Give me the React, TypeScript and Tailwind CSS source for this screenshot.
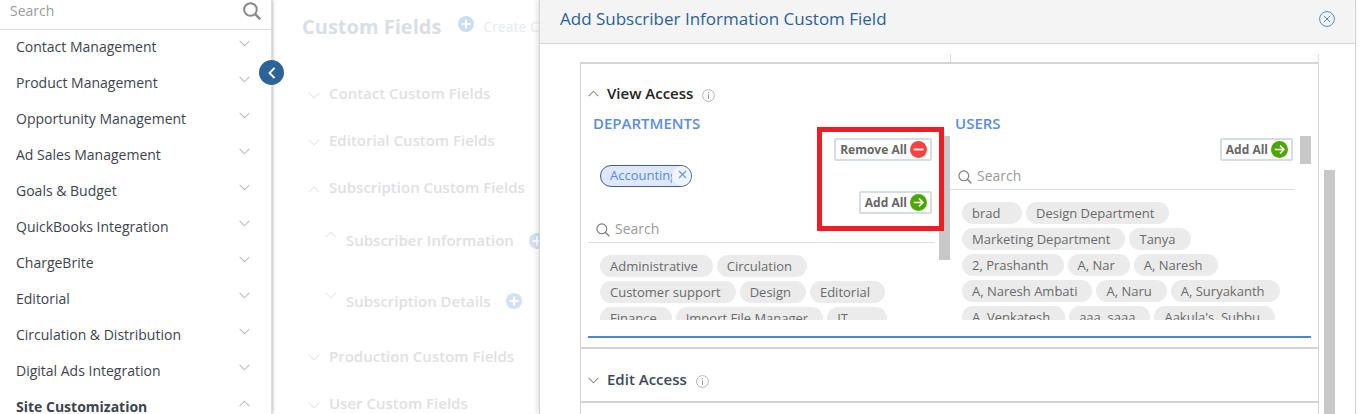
import React from "react";

const font = { fontFamily: '"Open Sans", sans-serif' };

const menu = [
    "Contact Management",
    "Product Management",
    "Opportunity Management",
    "Ad Sales Management",
    "Goals & Budget",
    "QuickBooks Integration",
    "ChargeBrite",
    "Editorial",
    "Circulation & Distribution",
    "Digital Ads Integration",
];

const departments = [
    "Administrative",
    "Circulation",
    "Customer support",
    "Design",
    "Editorial",
    "Finance",
    "Import File Manager",
    "IT",
];

const users = [
    "brad",
    "Design Department",
    "Marketing Department",
    "Tanya",
    "2, Prashanth",
    "A, Nar",
    "A, Naresh",
    "A, Naresh Ambati",
    "A, Naru",
    "A, Suryakanth",
    "A, Venkatesh",
    "aaa, saaa",
    "Aakula's, Subbu",
];

function Chevron({ up, size = 12, color = "#bbbbbb" }: { up?: boolean; size?: number; color?: string }) {
    return (
        <svg width={size} height={7} viewBox="0 0 12 7" fill="none" className="shrink-0">
            <polyline
                points={up ? "0.7,6.3 6,1 11.3,6.3" : "0.7,0.7 6,6 11.3,0.7"}
                stroke={color}
                strokeWidth="1.2"
            />
        </svg>
    );
}

function SearchIcon({ size = 14, color = "#777777", width = 1.1 }: { size?: number; color?: string; width?: number }) {
    return (
        <svg width={size} height={size} viewBox="0 0 14 14" fill="none" className="shrink-0">
            <circle cx="5.8" cy="5.8" r="4.9" stroke={color} strokeWidth={width} />
            <line x1="9.3" y1="9.3" x2="13.4" y2="13.4" stroke={color} strokeWidth={width * 1.2} />
        </svg>
    );
}

function InfoIcon() {
    return (
        <svg width="13" height="13" viewBox="0 0 13 13" fill="none" className="shrink-0">
            <circle cx="6.5" cy="6.5" r="5.9" stroke="#aaaaaa" strokeWidth="0.9" />
            <line x1="6.5" y1="5.4" x2="6.5" y2="10" stroke="#999999" strokeWidth="1" />
            <line x1="6.5" y1="3" x2="6.5" y2="4.2" stroke="#999999" strokeWidth="1" />
        </svg>
    );
}

function PlusCircle({ color, size = 16 }: { color: string; size?: number }) {
    return (
        <svg width={size} height={size} viewBox="0 0 16 16" className="shrink-0">
            <circle cx="8" cy="8" r="8" fill={color} />
            <path d="M8 3.5v9M3.5 8h9" stroke="#ffffff" strokeWidth="2" />
        </svg>
    );
}

function ActionButton({ label, remove }: { label: string; remove?: boolean }) {
    return (
        <button className="flex h-[23px] items-center gap-[3px] rounded-[2px] border-2 border-[#d3dde2] bg-white pl-[4px] pr-[3px] text-[12px] leading-none font-bold text-[#666666]">
            {label}
            <svg width="17" height="17" viewBox="0 0 17 17">
                <circle cx="8.5" cy="8.5" r="8.5" fill={remove ? "#f44242" : "#4ea600"} />
                {remove ? (
                    <path d="M3.5 8.5h10" stroke="#ffffff" strokeWidth="1.8" />
                ) : (
                    <path d="M3.8 8.5h9M9 4.6l3.9 3.9L9 12.4" stroke="#ffffff" strokeWidth="1.5" fill="none" />
                )}
            </svg>
        </button>
    );
}

function Chip({ label }: { label: string }) {
    return (
        <span className="flex h-[22px] min-w-[60px] items-center rounded-full bg-[#ebebeb] pl-[10px] pr-[15px] text-[13px] leading-none whitespace-nowrap text-[#6a6a6a]">
            {label}
        </span>
    );
}

function FadedRow({ label, nested, up, height, plus }: { label: string; nested?: boolean; up?: boolean; height: string; plus?: boolean }) {
    return (
        <div className={`flex items-center whitespace-nowrap ${height} ${nested ? "pl-[53px]" : "pl-[36px]"}`}>
            <span className={nested ? "mb-[12px] w-[21px] shrink-0" : "mt-[3px] w-[21px] shrink-0"}>
                <Chevron up={up} color="#e8e8e8" />
            </span>
            <span className="shrink-0 text-[15px] font-semibold text-[#e0e0e2]">{label}</span>
            {plus && (
                <span className="ml-[15px] shrink-0">
                    <PlusCircle color="#d3e0f6" />
                </span>
            )}
        </div>
    );
}

export default function App() {
    return (
        <div className="relative flex h-[414px] w-[1365px] overflow-hidden bg-white" style={font}>
            {/* sidebar */}
            <aside className="relative z-10 h-full w-[272px] shrink-0 border-r border-[#dddddd] bg-white shadow-[1px_0_3px_rgba(0,0,0,0.25)]">
                <div className="flex h-[30px] items-center justify-between border-b border-[#dddddd] pl-[10px] pr-[10px] pb-[8px]">
                    <span className="text-[14px] text-[#9a9a9a]">Search</span>
                    <SearchIcon size={18} color="#8a8a8a" width={1.6} />
                </div>
                {menu.map((item) => (
                    <div key={item} className="flex h-[36px] items-center justify-between pb-[4px] pl-[16px] pr-[21px] text-[14px] text-[#3c444d]">
                        {item}
                        <span className="mb-[6px]">
                            <Chevron size={11} />
                        </span>
                    </div>
                ))}
                <div className="flex h-[36px] items-center justify-between pb-[4px] pl-[16px] pr-[21px] text-[14px] font-bold text-[#3c444d]">
                    Site Customization
                    <span className="mb-[6px]">
                        <Chevron up size={11} />
                    </span>
                </div>
                <button className="absolute left-[259px] top-[60px] flex h-[25px] w-[25px] items-center justify-center rounded-full bg-[#2d6497]">
                    <svg width="8" height="12" viewBox="0 0 8 12" fill="none">
                        <polyline points="6.5,1 1.5,6 6.5,11" stroke="#ffffff" strokeWidth="1.8" />
                    </svg>
                </button>
            </aside>

            {/* faded page behind the panel */}
            <main className="h-full w-[267px] shrink-0 overflow-hidden">
                <div className="flex h-[70px] items-start whitespace-nowrap pl-[30px] pt-[13px]">
                    <span className="text-[20px] leading-[28px] font-bold text-[#d9dee4]">Custom Fields</span>
                    <span className="ml-[17px] mt-[3px]">
                        <PlusCircle color="#c8dff2" />
                    </span>
                    <span className="ml-[9px] mt-[3px] w-[56px] overflow-hidden text-[14px] text-[#e4e9f6]">Create Custom Field</span>
                </div>
                <FadedRow label="Contact Custom Fields" height="h-[47px]" />
                <FadedRow label="Editorial Custom Fields" height="h-[47px]" />
                <FadedRow label="Subscription Custom Fields" up height="h-[47px]" />
                <FadedRow label="Subscriber Information" nested up plus height="h-[59px]" />
                <FadedRow label="Subscription Details" nested plus height="h-[62px]" />
                <FadedRow label="Production Custom Fields" height="h-[48px]" />
                <FadedRow label="User Custom Fields" height="h-[47px]" />
            </main>

            {/* slide-in panel */}
            <section className="relative z-20 flex h-full w-[817px] shrink-0 flex-col border-x border-[#d4d4d4] bg-white shadow-[-2px_0_5px_rgba(0,0,0,0.12)]">
                <header className="flex h-[44px] shrink-0 items-center justify-between border-b border-[#d4d4d4] bg-[#f4f4f4] pl-[20px] pr-[20px] pb-[6px]">
                    <h1 className="text-[17px] text-[#2a6296]">Add Subscriber Information Custom Field</h1>
                    <svg width="16" height="16" viewBox="0 0 16 16" fill="none">
                        <circle cx="8" cy="8" r="7.4" stroke="#4a90d0" strokeWidth="1" />
                        <path d="M4.8 4.8l6.4 6.4M11.2 4.8l-6.4 6.4" stroke="#4a90d0" strokeWidth="1" />
                    </svg>
                </header>

                <div className="relative flex-1 pl-[40px]">
                    <div className="ml-[370px] mt-[10px] h-[8px] w-[369px] rounded-br-[3px] border-x border-[#dddddd]" />

                    <div className="w-[739px] border-x border-[#d4d4d4]">
                        <div className="h-[287px] border-y-2 border-[#d4d4d4]">
                            <div className="flex h-[22px] items-center pl-[7px] mt-[18px]">
                                <Chevron up color="#8a8a8a" size={11} />
                                <span className="ml-[8px] text-[15px] font-semibold text-[#222222]">View Access</span>
                                <span className="ml-[9px] mt-[5px]">
                                    <InfoIcon />
                                </span>
                            </div>

                            <div className="ml-[7px] mt-[9px] grid w-[723px] grid-cols-[362px_361px]">
                                {/* departments */}
                                <div className="relative">
                                    <h2 className="flex h-[20px] items-center pl-[5px] text-[15px] font-semibold text-[#5b8ddd]">DEPARTMENTS</h2>
                                    <div className="flex flex-col items-end gap-[4px] pr-[18px] pt-[5px]">
                                        <ActionButton label="Remove All" remove />
                                        <span className="ml-[12px] flex h-[22px] w-[92px] items-center self-start overflow-hidden rounded-full border border-[#44607f] bg-[#dde8fb] pl-[9px] text-[13px] text-[#5a8ad8]">
                                            <span className="w-[62px] shrink-0 overflow-hidden">Accounting</span>
                                            <span className="flex h-[20px] w-[20px] shrink-0 items-center justify-center rounded-full bg-[#eef3fc]">
                                                <svg width="9" height="9" viewBox="0 0 9 9" fill="none" className="mb-[3px]">
                                                    <path d="M1 1l7 7M8 1L1 8" stroke="#6f9ae0" strokeWidth="1.3" />
                                                </svg>
                                            </span>
                                        </span>
                                        <ActionButton label="Add All" />
                                    </div>
                                    <div className="flex h-[29px] w-[346px] items-center border-b border-[#dddddd] pl-[8px]">
                                        <span className="mt-[3px]">
                                            <SearchIcon />
                                        </span>
                                        <span className="ml-[5px] text-[14px] text-[#9a9a9a]">Search</span>
                                    </div>
                                    <div className="flex h-[77px] w-[346px] flex-wrap content-start gap-[4px] overflow-hidden pl-[12px] pt-[12px]">
                                        {departments.map((d) => (
                                            <Chip key={d} label={d} />
                                        ))}
                                    </div>
                                    <div className="absolute left-[351px] top-[23px] h-[124px] w-[11px] bg-[#c8c8c8]" />
                                </div>

                                {/* users */}
                                <div className="relative">
                                    <h2 className="flex h-[20px] items-center pl-[5px] text-[15px] font-semibold text-[#5b8ddd]">USERS</h2>
                                    <div className="flex flex-col items-end pr-[18px] pt-[5px]">
                                        <ActionButton label="Add All" />
                                    </div>
                                    <div className="flex h-[29px] w-[345px] items-center border-b border-[#dddddd] pl-[8px]">
                                        <span className="mt-[3px]">
                                            <SearchIcon />
                                        </span>
                                        <span className="ml-[5px] text-[14px] text-[#9a9a9a]">Search</span>
                                    </div>
                                    <div className="flex h-[130px] w-[335px] flex-wrap content-start gap-[4px] overflow-hidden pl-[12px] pt-[12px]">
                                        {users.map((u) => (
                                            <Chip key={u} label={u} />
                                        ))}
                                    </div>
                                    <div className="absolute left-[350px] top-[23px] h-[28px] w-[11px] bg-[#c8c8c8]" />
                                </div>
                            </div>

                            <div className="ml-[7px] mt-[16px] h-[2px] w-[723px] bg-[#4a86d8]" />
                        </div>

                        <div className="flex h-[54px] items-center border-b-2 border-[#d4d4d4] pl-[7px] pt-[8px]">
                            <span className="mt-[2px]">
                                <Chevron color="#8a8a8a" size={11} />
                            </span>
                            <span className="ml-[8px] text-[15px] font-semibold text-[#3a4a5a]">Edit Access</span>
                            <span className="ml-[9px] mt-[4px]">
                                <InfoIcon />
                            </span>
                        </div>
                        <div className="h-[12px]" />
                    </div>

                    <div className="absolute left-[784px] top-[126px] bottom-0 w-[11px] bg-[#c8c8c8]" />
                </div>
            </section>

            {/* annotation around the bulk buttons */}
            <div className="absolute left-[817px] top-[127px] z-30 h-[104px] w-[127px] border-[5px] border-[#ee1c25]" />
        </div>
    );
}
